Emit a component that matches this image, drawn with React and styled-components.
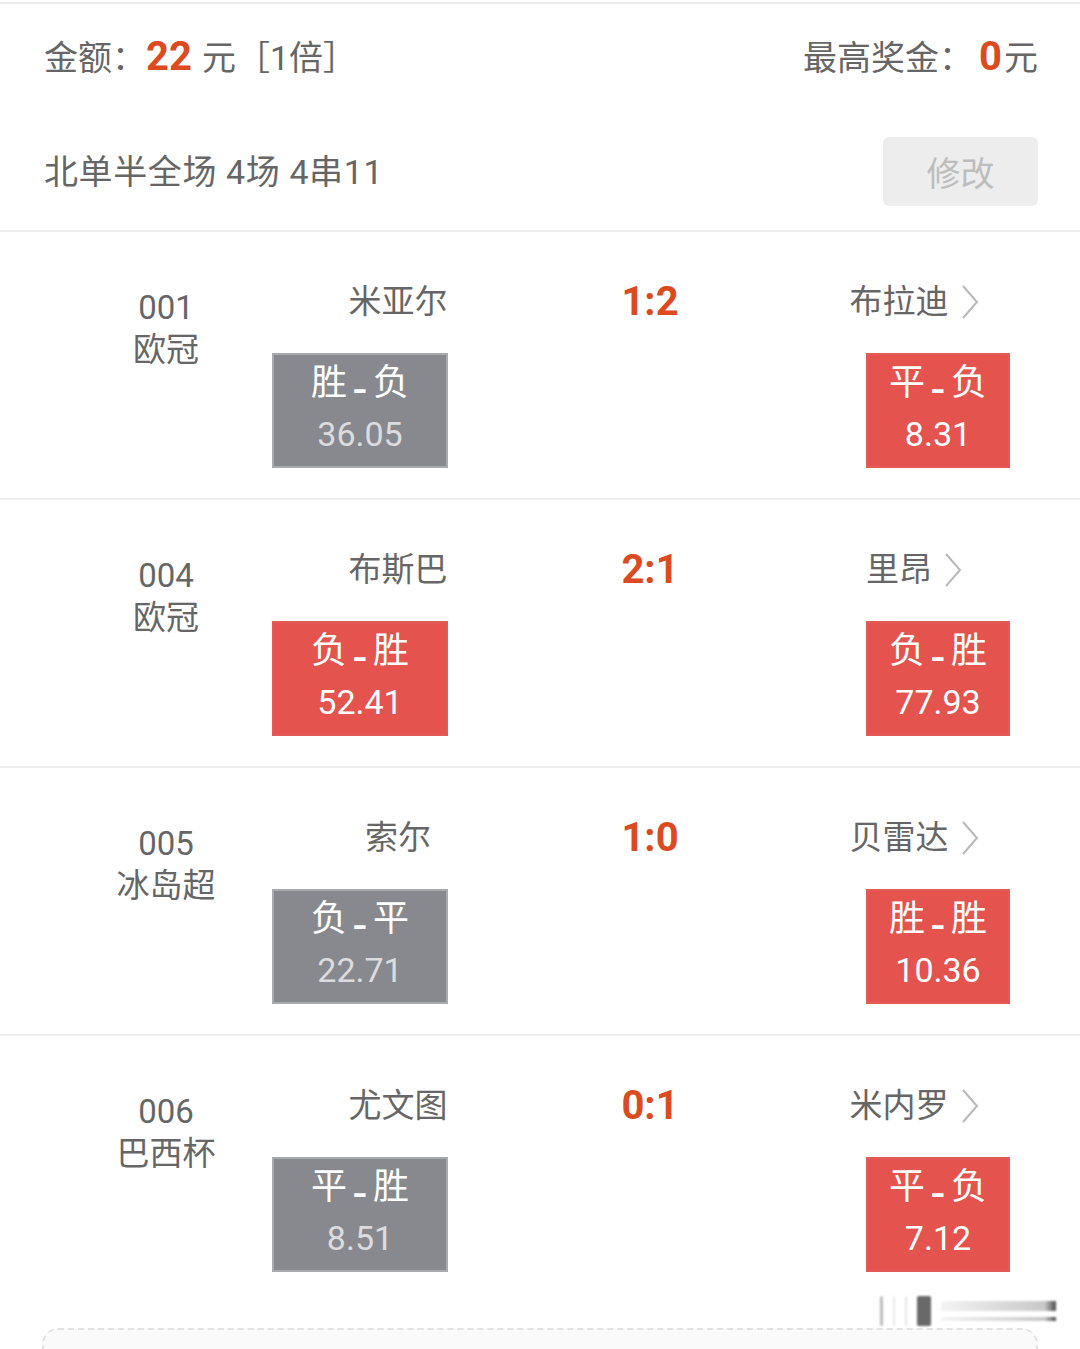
import React from "react";
import styled, { createGlobalStyle } from "styled-components";

const Global = createGlobalStyle`
  html, body { margin: 0; padding: 0; background: #ffffff; }
  body { font-family: Roboto, "Noto Sans CJK SC", "Noto Sans", sans-serif; color: #666; }
  * { box-sizing: border-box; }
`;

const Page = styled.div`
  width: 1080px;
  height: 1349px;
  overflow: hidden;
  padding-top: 2px;
  position: relative;
  background: #fff;
`;

const Header = styled.div`
  border-top: 2px solid #ececec;
  border-bottom: 2px solid #eeeeee;
  padding: 28px 42px 24px 44px;
  display: flex;
  flex-direction: column;
  gap: 55px;
`;

const HeaderRow = styled.div`
  display: flex;
  align-items: center;
  justify-content: space-between;
  height: ${(p) => p.$h}px;
`;

const Label = styled.span`
  font-size: 34px;
  line-height: 50px;
  color: #666;
  white-space: pre;
  letter-spacing: ${(p) => p.$ls || "0"};
`;

const Amount = styled.span`
  font-size: 40px;
  font-weight: 700;
  color: #dc4a1f;
  line-height: 50px;
  margin: ${(p) => p.$m || "0"};
`;

const EditButton = styled.div`
  width: 155px;
  height: 69px;
  border-radius: 6px;
  background: #ededed;
  color: #bdbdbd;
  font-size: 34px;
  display: flex;
  align-items: center;
  justify-content: center;
`;

const MatchRow = styled.div`
  display: grid;
  grid-template-columns: 212px 252px 252px 1fr;
  padding: 50px 28px 30px 60px;
  border-bottom: ${(p) => (p.$last ? "none" : "2px solid #eeeeee")};
`;

const League = styled.div`
  grid-row: 1 / span 2;
  padding-top: 5px;
  display: flex;
  flex-direction: column;
  align-items: center;
  font-size: 33px;
  line-height: 42px;
  color: #666;
`;

const TeamName = styled.div`
  height: 40px;
  line-height: 40px;
  font-size: 33px;
  color: #666;
  display: flex;
  align-items: center;
  justify-content: center;
  gap: 12px;
`;

const Score = styled.div`
  height: 40px;
  line-height: 40px;
  font-size: 40px;
  font-weight: 700;
  color: #dc4a1f;
  text-align: center;
`;

const Pick = styled.div`
  margin-top: 31px;
  width: ${(p) => (p.$away ? 144 : 176)}px;
  height: 115px;
  justify-self: ${(p) => (p.$away ? "end" : "start")};
  margin-right: ${(p) => (p.$away ? 42 : 0)}px;
  background: ${(p) => (p.$hit ? "#e5534f" : "#88898e")};
  border: 2px solid ${(p) => (p.$hit ? "#e45a56" : "#a9aaad")};
  display: flex;
  flex-direction: column;
  align-items: center;
  padding-top: 6px;
`;

const PickName = styled.div`
  font-size: 36px;
  line-height: 44px;
  color: #fff;
  display: flex;
  align-items: center;
`;

const Dash = styled.span`
  display: inline-block;
  width: 26px;
  text-align: center;
  font-size: 38px;
  font-weight: 500;
  transform: translateY(7px) scaleX(1.15);
`;

const PickOdds = styled.div`
  margin-top: 6px;
  font-size: 34px;
  line-height: 46px;
  color: ${(p) => (p.$hit ? "#fff" : "#dcdcde")};
`;

const Footer = styled.div`
  padding: 26px 42px 0 42px;
`;

const DashedCard = styled.div`
  height: 80px;
  border: 2px dashed #e2e2e2;
  border-radius: 16px;
  background: #fafafa;
`;

const Watermark = styled.div`
  position: absolute;
  left: 880px;
  top: 1296px;
  width: 176px;
  height: 30px;
  display: flex;
  align-items: stretch;
  gap: 10px;
  filter: blur(1.2px);
  opacity: 0.8;
`;

const WmBar = styled.div`
  width: ${(p) => p.$w}px;
  background: ${(p) => p.$c};
  border-radius: 2px;
`;

const WmGrad = styled.div`
  flex: 1;
  display: flex;
  flex-direction: column;
  gap: 6px;
  justify-content: center;
`;

const WmLine = styled.div`
  height: ${(p) => p.$h}px;
  background: linear-gradient(to right, #f2f2f2, #bbb 90%, #222);
`;

const Chevron = () => (
  <svg width="18" height="36" viewBox="0 0 18 36">
    <polyline points="2,2 16,18 2,34" fill="none" stroke="#b8b8b8" strokeWidth="2" />
  </svg>
);

const matches = [
  { no: "001", league: "欧冠", home: "米亚尔", score: "1:2", away: "布拉迪", hp: ["胜", "负", "36.05", false], ap: ["平", "负", "8.31", true] },
  { no: "004", league: "欧冠", home: "布斯巴", score: "2:1", away: "里昂", hp: ["负", "胜", "52.41", true], ap: ["负", "胜", "77.93", true] },
  { no: "005", league: "冰岛超", home: "索尔", score: "1:0", away: "贝雷达", hp: ["负", "平", "22.71", false], ap: ["胜", "胜", "10.36", true] },
  { no: "006", league: "巴西杯", home: "尤文图", score: "0:1", away: "米内罗", hp: ["平", "胜", "8.51", false], ap: ["平", "负", "7.12", true] },
];

const PickBox = ({ data, away }) => (
  <Pick $away={away} $hit={data[3]}>
    <PickName>
      {data[0]}
      <Dash>-</Dash>
      {data[1]}
    </PickName>
    <PickOdds $hit={data[3]}>{data[2]}</PickOdds>
  </Pick>
);

export default function App() {
  return (
    <Page>
      <Global />
      <Header>
        <HeaderRow $h={50}>
          <div>
            <Label>金额：</Label>
            <Amount $m="0 10px 0 0">22</Amount>
            <Label>元［1倍］</Label>
          </div>
          <div>
            <Label>最高奖金：</Label>
            <Amount $m="0 2px 0 6px">0</Amount>
            <Label>元</Label>
          </div>
        </HeaderRow>
        <HeaderRow $h={69}>
          <Label $ls="0.6px">北单半全场 4场 4串11</Label>
          <EditButton>修改</EditButton>
        </HeaderRow>
      </Header>
      {matches.map((m, i) => (
        <MatchRow key={m.no} $last={i === matches.length - 1}>
          <League>
            <span>{m.no}</span>
            <span>{m.league}</span>
          </League>
          <TeamName>{m.home}</TeamName>
          <Score>{m.score}</Score>
          <TeamName>
            {m.away}
            <Chevron />
          </TeamName>
          <PickBox data={m.hp} />
          <div />
          <PickBox data={m.ap} away />
        </MatchRow>
      ))}
      <Footer>
        <DashedCard />
      </Footer>
      <Watermark>
        <WmBar $w={3} $c="#aaa" />
        <WmBar $w={2} $c="#e4e4e4" />
        <WmBar $w={2} $c="#ddd" />
        <WmBar $w={14} $c="#444" />
        <WmGrad>
          <WmLine $h={10} />
          <WmLine $h={4} />
        </WmGrad>
      </Watermark>
    </Page>
  );
}
